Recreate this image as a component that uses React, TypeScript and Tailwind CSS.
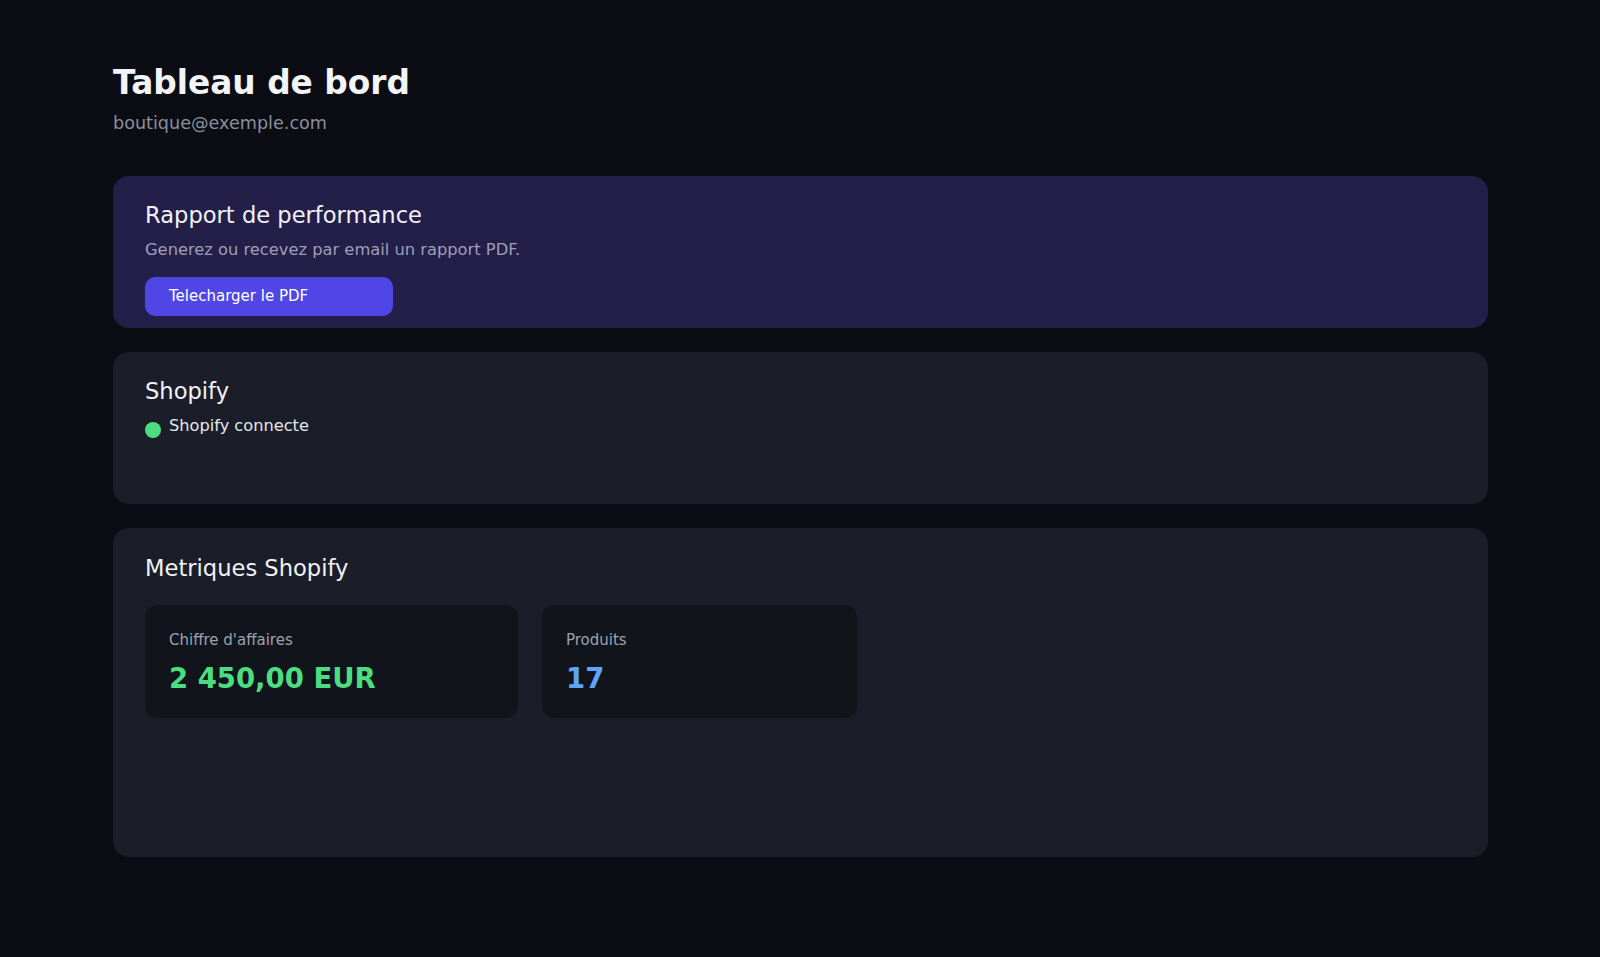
import React from 'react';

const FONT = { fontFamily: '"DejaVu Sans", "Liberation Sans", sans-serif' };

function MetricCard({ label, value, color, width }: { label: string; value: string; color: string; width: string }) {
  return (
    <div className={`${width} rounded-xl bg-[#12141c] px-6 pt-[25px] pb-[22px]`}>
      <p className="text-[15px] leading-5 text-[#9ca3af]">{label}</p>
      <p className={`mt-2.5 text-[27.5px] leading-9 font-bold ${color}`}>{value}</p>
    </div>
  );
}

export default function App() {
  return (
    <div style={FONT} className="min-h-screen bg-[#0b0c14] pl-[113px] pr-[112px] pt-16 pb-[100px]">
      {/* Header */}
      <h1 className="text-[32.8px] leading-[38px] font-bold text-[#f3f4f6]">Tableau de bord</h1>
      <p className="mt-2 text-[17.6px] leading-[26px] text-[#8b8f9c]">boutique@exemple.com</p>

      <div className="mt-10 flex flex-col gap-6">
        {/* Report */}
        <section className="min-h-[152px] rounded-2xl bg-[#241f49] px-8 pt-[25px] pb-3">
          <h2 className="text-[22.6px] leading-[29px] text-[#f1f1f6]">Rapport de performance</h2>
          <p className="mt-2 text-[16.3px] leading-6 text-[#a09db8]">Generez ou recevez par email un rapport PDF.</p>
          <button className="mt-[15px] h-[39px] w-[248px] rounded-[10px] bg-[#4f46e5] pl-6 text-left text-[15px] text-white">
            Telecharger le PDF
          </button>
        </section>

        {/* Shopify status */}
        <section className="min-h-[152px] rounded-2xl bg-[#1b1e29] px-8 pt-[25px] pb-3">
          <h2 className="text-[22.6px] leading-[29px] text-[#f1f2f5]">Shopify</h2>
          <div className="mt-2 flex items-start gap-2">
            <span className="mt-2 h-4 w-4 shrink-0 rounded-full bg-[#4ade80]" />
            <span className="text-[16.2px] leading-6 text-[#e5e7eb]">Shopify connecte</span>
          </div>
        </section>

        {/* Metrics */}
        <section className="min-h-[329px] rounded-2xl bg-[#1b1e29] px-8 pt-[26px] pb-6">
          <h2 className="text-[22.6px] leading-[29px] text-[#f1f2f5]">Metriques Shopify</h2>
          <div className="mt-[22px] flex gap-6">
            <MetricCard label="Chiffre d'affaires" value="2 450,00 EUR" color="text-[#4ade80]" width="w-[373px]" />
            <MetricCard label="Produits" value="17" color="text-[#60a5fa]" width="w-[315px]" />
          </div>
        </section>
      </div>
    </div>
  );
}
